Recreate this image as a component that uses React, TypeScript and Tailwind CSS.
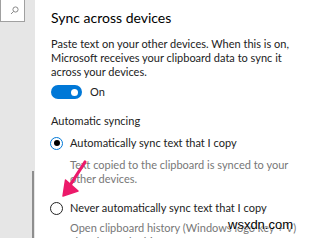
export default function App() {
  const font = { fontFamily: 'Lato, "Open Sans", sans-serif' };
  return (
    <div className="relative flex w-[319px] h-[238px] overflow-hidden bg-white" style={font}>
      {/* Left nav column */}
      <div className="flex flex-col w-[35px] shrink-0 bg-[#e6e6e6]">
        <div className="flex items-center justify-end w-[25px] h-[23px] -mt-px bg-white border border-[#a0a0a0] pr-[5px]">
          <svg width="9" height="9" viewBox="0 0 9 9" fill="none" stroke="#8a8a8a" strokeWidth="1">
            <circle cx="5.5" cy="3.5" r="2.6" />
            <path d="M3.6 5.4 L1 8" />
          </svg>
        </div>
        <div className="mt-[149px] ml-[32px] w-[2px] flex-1 bg-[#8e8e8e]" />
      </div>

      {/* Settings content */}
      <div className="flex-1 pl-[16px] pt-[8px] text-[#222] whitespace-nowrap">
        <h2 className="text-[14px] leading-[20px] text-black">Sync across devices</h2>
        <p className="mt-[9px] text-[11px] leading-[14px]">
          Paste text on your other devices. When this is on,
          <br />
          Microsoft receives your clipboard data to sync it
          <br />
          across your devices.
        </p>
        <div className="flex items-center gap-[8px] mt-[6px]">
          <div className="flex items-center justify-end w-[31px] h-[14px] rounded-full bg-[#0078d7] pr-[4px]">
            <div className="w-[7px] h-[7px] rounded-full bg-white" />
          </div>
          <span className="text-[11px] leading-[14px]">On</span>
        </div>
        <div className="mt-[15px] text-[11px] leading-[14px]">Automatic syncing</div>

        <div className="flex items-center gap-[7px] mt-[8px] -ml-[1px]">
          <div className="flex items-center justify-center w-[13px] h-[13px] rounded-full border-[1.5px] border-[#0078d7]">
            <div className="w-[6px] h-[6px] rounded-full bg-black" />
          </div>
          <span className="text-[11px] leading-[14px]">Automatically sync text that I copy</span>
        </div>
        <p className="ml-[19px] mt-[8px] text-[11px] leading-[14px] text-[#777]">
          Text copied to the clipboard is synced to your
          <br />
          other devices.
        </p>

        <div className="flex items-center gap-[7px] mt-[15px] -ml-[1px]">
          <div className="w-[13px] h-[13px] rounded-full border-[1.5px] border-[#222]" />
          <span className="text-[11px] leading-[14px]">Never automatically sync text that I copy</span>
        </div>
        <p className="ml-[19px] mt-[6px] text-[11px] leading-[14px] text-[#777]">
          Open clipboard history (Windows logo key + V)
          <br />
          also shows the history.
        </p>
      </div>

      {/* Annotation arrow */}
      <svg className="absolute left-0 top-0" width="319" height="238" viewBox="0 0 319 238" fill="none">
        <path d="M85 162 L67 190" stroke="#ec1a6a" strokeWidth="3.2" strokeLinecap="round" />
        <path d="M63 196 L65.5 180 L78 191 Z" fill="#ec1a6a" stroke="#ec1a6a" strokeWidth="1.5" strokeLinejoin="round" />
      </svg>

      {/* Watermark */}
      <div
        className="absolute left-[228px] top-[217px] text-[13px] leading-[16px] text-black"
        style={{ fontFamily: '"Liberation Sans", sans-serif', textShadow: '0 0 2px #fff, 0 0 2px #fff' }}
      >
        wsxdn.com
      </div>
    </div>
  );
}
